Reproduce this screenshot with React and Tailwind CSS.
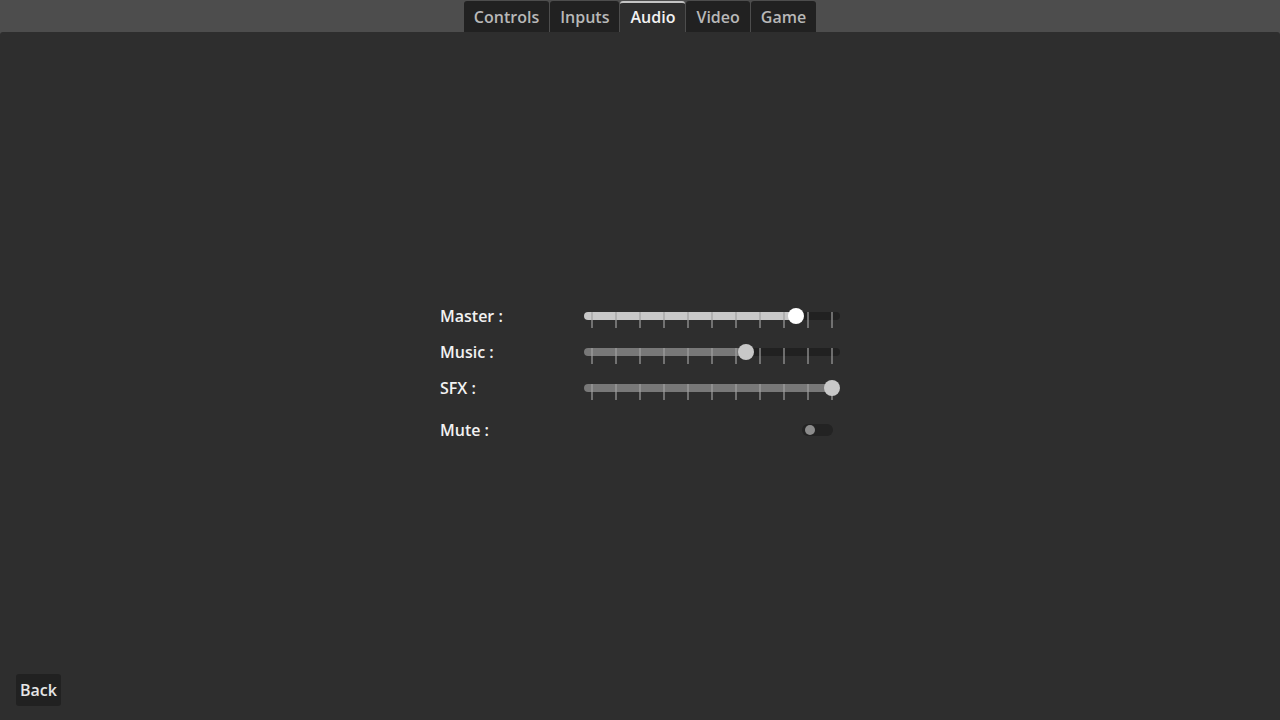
import React, { useState } from 'react';

const tabs = ['Controls', 'Inputs', 'Audio', 'Video', 'Game'];

const sliders = [
    { label: 'Master :', value: 0.85, fill: 'bg-[#c8c8c8]', grab: 'bg-[#ffffff]' },
    { label: 'Music :', value: 0.64, fill: 'bg-[#787878]', grab: 'bg-[#c8c8c8]' },
    { label: 'SFX :', value: 1, fill: 'bg-[#787878]', grab: 'bg-[#c8c8c8]' },
];

const Slider = ({ value, fill, grab }) => {
    const pos = 8 + value * 240;
    return (
        <div className="relative w-[256px] h-[32px]">
            <div className="absolute left-0 right-0 top-[12px] h-[8px] rounded-full bg-[#212121]" />
            <div className={`absolute left-0 top-[12px] h-[8px] rounded-l-full ${fill}`} style={{ width: pos }} />
            {Array.from({ length: 11 }).map((_, i) => (
                <div
                    key={i}
                    className="absolute top-[12px] h-[16px] w-[2px] bg-[#a0a0a0]/60"
                    style={{ left: 7 + i * 24 }}
                />
            ))}
            <div className={`absolute top-[8px] w-4 h-4 rounded-full ${grab}`} style={{ left: pos - 8 }} />
        </div>
    );
};

const App = () => {
    const [active, setActive] = useState('Audio');

    return (
        <div
            className="h-screen flex flex-col bg-[#4d4d4d] text-[16px] font-semibold"
            style={{ fontFamily: '"Open Sans", "Noto Sans", sans-serif' }}
        >
            <div className="h-8 flex justify-center items-end gap-px">
                {tabs.map((t) => (
                    <button
                        key={t}
                        onClick={() => setActive(t)}
                        className={
                            t === active
                                ? 'h-[31px] px-[10px] rounded-t-[3px] bg-[#2e2e2e] border-t-2 border-[#c4c4c4] text-[#f2f2f2] leading-none'
                                : 'h-[31px] px-[10px] rounded-t-[3px] bg-[#212121] text-[#b8b8b8] leading-none'
                        }
                    >
                        <span className={t === active ? 'relative -top-[1px]' : ''}>{t}</span>
                    </button>
                ))}
            </div>

            <div className="flex-1 flex flex-col bg-[#2e2e2e] rounded-t-[3px]">
                <div className="pt-[268px] flex justify-center">
                    <div className="w-[400px] flex flex-col gap-1">
                        {sliders.map((s) => (
                            <div key={s.label} className="h-8 flex items-center">
                                <span className="w-[144px] text-[#f2f2f2]">{s.label}</span>
                                <Slider value={s.value} fill={s.fill} grab={s.grab} />
                            </div>
                        ))}
                        <div className="h-[44px] flex items-center">
                            <span className="w-[144px] text-[#f2f2f2]">Mute :</span>
                            <div className="flex-1 flex justify-end pr-[7px]">
                                <div className="w-[31px] h-[12px] rounded-full bg-[#232323] flex items-center pl-[3px]">
                                    <div className="w-[10px] h-[10px] rounded-full bg-[#8c8c8c]" />
                                </div>
                            </div>
                        </div>
                    </div>
                </div>

                <div className="flex-1" />

                <div className="pl-4 pb-[14px]">
                    <button className="h-8 px-1 rounded-[3px] bg-[#212121] text-[#e6e6e6]">Back</button>
                </div>
            </div>
        </div>
    );
};

export default App;
